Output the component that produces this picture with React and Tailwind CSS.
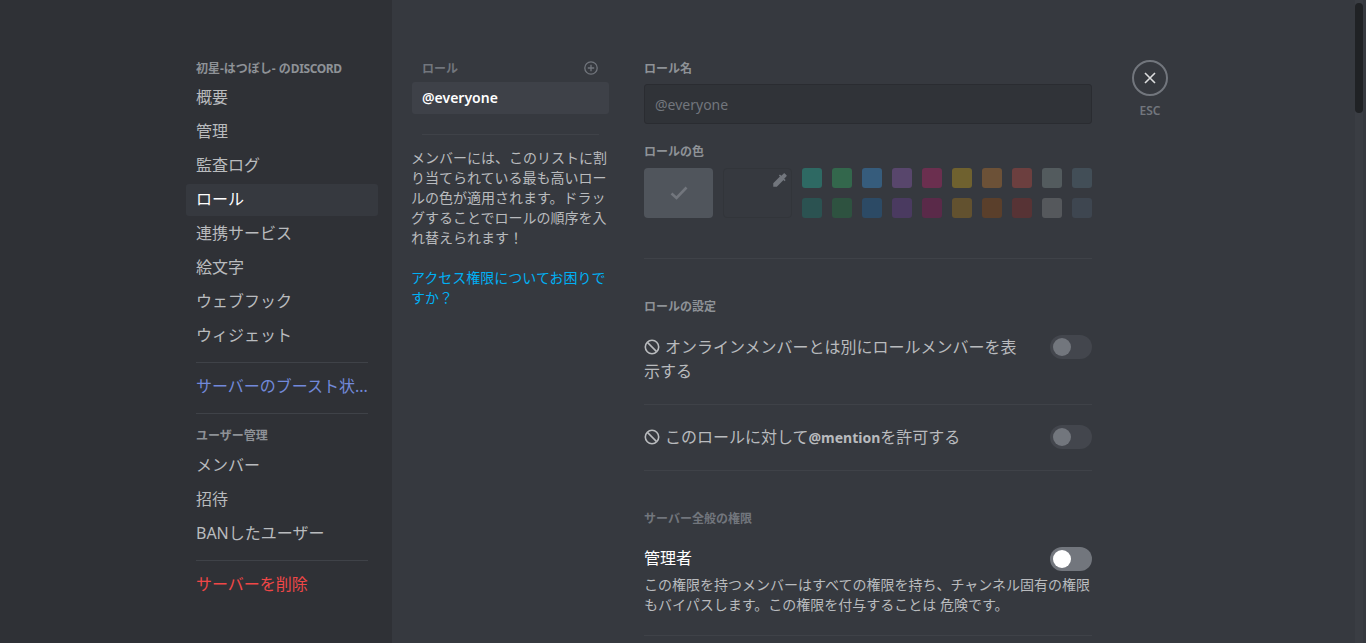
const navA = ["概要", "管理", "監査ログ", "ロール", "連携サービス", "絵文字", "ウェブフック", "ウィジェット"];
const navB = ["メンバー", "招待", "BANしたユーザー"];
const row1 = ["bg-[#2e6963]", "bg-[#33674c]", "bg-[#365c7c]", "bg-[#58466c]", "bg-[#6b2f4f]", "bg-[#6f612f]", "bg-[#6c5137]", "bg-[#6c3f3f]", "bg-[#535b5e]", "bg-[#424e57]"];
const row2 = ["bg-[#2b5251]", "bg-[#2e5240]", "bg-[#2c4a65]", "bg-[#4a3a60]", "bg-[#5a2a49]", "bg-[#62512f]", "bg-[#5a3f2b]", "bg-[#573335]", "bg-[#55585c]", "bg-[#3e4650]"];

function NavItem({ label, active, color = "text-[#b9bbbe]" }) {
  return (
    <div className={`h-[32px] mb-[2px] px-[10px] pb-[2px] flex items-center rounded-[3px] text-[16px] leading-[20px] whitespace-nowrap ${active ? "bg-[#36393f] text-white" : color}`}>
      {label}
    </div>
  );
}

function Divider({ className = "" }) {
  return <div className={`h-px bg-[#3f4248] ${className}`} />;
}

function Heading({ children, className = "" }) {
  return <div className={`text-[12px] leading-[16px] font-bold whitespace-nowrap ${className}`}>{children}</div>;
}

function Toggle({ on }) {
  return (
    <div className={`w-[42px] h-[24px] rounded-full shrink-0 flex items-center pl-[3px] ${on ? "bg-[#72767d]" : "bg-[#43464d]"}`}>
      <div className={`w-[18px] h-[18px] rounded-full ${on ? "bg-white" : "bg-[#72767d]"}`} />
    </div>
  );
}

function Ban() {
  return (
    <svg width="16" height="16" viewBox="0 0 16 16" className="inline-block align-[-2px] mr-[5px]" fill="none" stroke="#b9bbbe" strokeWidth="1.6">
      <circle cx="8" cy="8" r="6.7" />
      <path d="M3.4 3.4 12.6 12.6" />
    </svg>
  );
}

export default function App() {
  return (
    <div className="relative flex h-[643px] w-full overflow-hidden bg-[#36393f]" style={{ fontFamily: '"Noto Sans","Noto Sans CJK JP",sans-serif' }}>
      <aside className="w-[392px] shrink-0 bg-[#2f3136] pt-[60px] pl-[186px] pr-[14px]">
        <Heading className="px-[10px] h-[16px] pt-[1px] mb-[6px] text-[#8e9297]">初星-はつぼし- の<span className="tracking-[-0.4px]">DISCORD</span></Heading>
        {navA.map((n) => <NavItem key={n} label={n} active={n === "ロール"} />)}
        <Divider className="mx-[10px] mt-[10px] mb-[7px] bg-[#3a3c42]" />
        <div className="h-[32px] px-[10px] flex items-center text-[16px] leading-[20px] text-[#7289da] whitespace-nowrap">サーバーのブースト状...</div>
        <Divider className="mx-[10px] mt-[11px] mb-[14px] bg-[#3a3c42]" />
        <Heading className="px-[10px] h-[16px] mb-[6px] text-[#8e9297]">ユーザー管理</Heading>
        {navB.map((n) => <NavItem key={n} label={n} />)}
        <Divider className="mx-[10px] mt-[10px] mb-[8px] bg-[#3a3c42]" />
        <NavItem label="サーバーを削除" color="text-[#f04747]" />
      </aside>

      <main className="flex pt-[60px] pl-[20px]">
        <section className="w-[197px] shrink-0">
          <div className="flex items-center justify-between h-[16px] pl-[10px] pr-[11px] mb-[6px]">
            <Heading className="pt-[1px] text-[#72767d]">ロール</Heading>
            <svg width="14" height="14" viewBox="0 0 14 14" fill="none" stroke="#72767d" strokeWidth="1.3">
              <circle cx="7" cy="7" r="6.2" />
              <path d="M7 3.8v6.4M3.8 7h6.4" />
            </svg>
          </div>
          <div className="h-[32px] px-[10px] pb-[2px] flex items-center rounded-[3px] bg-[#3e4148] text-[14px] font-semibold text-white">@everyone</div>
          <Divider className="mx-[10px] mt-[20px] mb-[13px]" />
          <p className="-ml-[1px] text-[14px] leading-[20px] text-[#b9bbbe]">メンバーには、このリストに割り当てられている最も高いロールの色が適用されます。ドラッグすることでロールの順序を入れ替えられます！</p>
          <p className="-ml-[1px] mt-[20px] text-[14px] leading-[20px] text-[#00b0f4]">アクセス権限についてお困りですか？</p>
        </section>

        <section className="w-[448px] ml-[35px] shrink-0">
          <Heading className="h-[16px] pt-[1px] mb-[8px] text-[#8e9297]">ロール名</Heading>
          <div className="h-[40px] px-[10px] flex items-center rounded-[3px] border border-[#2a2c31] bg-[#303338] text-[14px] text-[#72767d]">@everyone</div>
          <Heading className="h-[16px] pt-[1px] mt-[19px] mb-[9px] text-[#8e9297]">ロールの色</Heading>
          <div className="flex">
            <div className="w-[69px] h-[50px] rounded-[4px] bg-[#50555c] flex items-center justify-center">
              <svg width="18" height="14" viewBox="0 0 18 14" fill="none" stroke="#72767d" strokeWidth="2.6">
                <path d="M1.5 7.5 6.5 12 16.5 1.5" />
              </svg>
            </div>
            <div className="relative w-[69px] h-[50px] ml-[10px] rounded-[4px] border border-[#32353a] bg-[#36393f]">
              <svg width="18" height="18" viewBox="0 0 24 24" className="absolute right-[2px] top-[2px]" fill="#72767d">
                <path d="M20.71 5.63l-2.34-2.34c-.39-.39-1.02-.39-1.41 0l-3.12 3.12-1.93-1.91-1.41 1.41 1.42 1.42L3 16.25V21h4.75l8.92-8.92 1.42 1.42 1.41-1.41-1.92-1.92 3.12-3.12c.4-.4.4-1.03.01-1.42z" />
              </svg>
            </div>
            <div className="ml-[10px] flex flex-col gap-[10px]">
              {[row1, row2].map((r, i) => (
                <div key={i} className="flex gap-[10px]">
                  {r.map((c, j) => <div key={j} className={`w-[20px] h-[20px] rounded-[3px] ${c}`} />)}
                </div>
              ))}
            </div>
          </div>
          <Divider className="mt-[40px]" />

          <Heading className="mt-[40px] h-[16px] text-[#8e9297]">ロールの設定</Heading>
          <div className="mt-[20px] flex items-start justify-between">
            <div className="w-[380px] text-[16px] leading-[24px] text-[#b9bbbe]"><Ban />オンラインメンバーとは別にロールメンバーを表示する</div>
            <Toggle />
          </div>
          <Divider className="mt-[21px]" />
          <div className="mt-[20px] flex items-start justify-between">
            <div className="text-[16px] leading-[24px] text-[#b9bbbe]"><Ban />このロールに対して<b className="text-[14px]">@mention</b>を許可する</div>
            <Toggle />
          </div>
          <Divider className="mt-[20px]" />

          <Heading className="mt-[40px] h-[16px] text-[#72767d]">サーバー全般の権限</Heading>
          <div className="mt-[20px] flex items-start justify-between">
            <div className="text-[16px] leading-[22px] text-white">管理者</div>
            <Toggle on />
          </div>
          <p className="mt-[4px] text-[14px] leading-[20px] text-[#b9bbbe]">この権限を持つメンバーはすべての権限を持ち、チャンネル固有の権限もバイパスします。この権限を付与することは 危険です。</p>
          <Divider className="mt-[20px]" />
        </section>

        <div className="ml-[40px] w-[36px] shrink-0 flex flex-col items-center">
          <div className="w-[36px] h-[36px] rounded-full border-2 border-[#72767d] flex items-center justify-center">
            <svg width="12" height="12" viewBox="0 0 12 12" fill="none" stroke="#dcddde" strokeWidth="1.6"><path d="M1 1l10 10M11 1 1 11" /></svg>
          </div>
          <div className="mt-[7px] text-[12px] leading-[16px] font-semibold text-[#72767d]">ESC</div>
        </div>
      </main>

      <div className="absolute right-[3px] top-0 bottom-0 w-[8px] bg-[#3a3d43]">
        <div className="mt-[3px] h-[110px] rounded-full bg-[#202225]" />
      </div>
    </div>
  );
}
